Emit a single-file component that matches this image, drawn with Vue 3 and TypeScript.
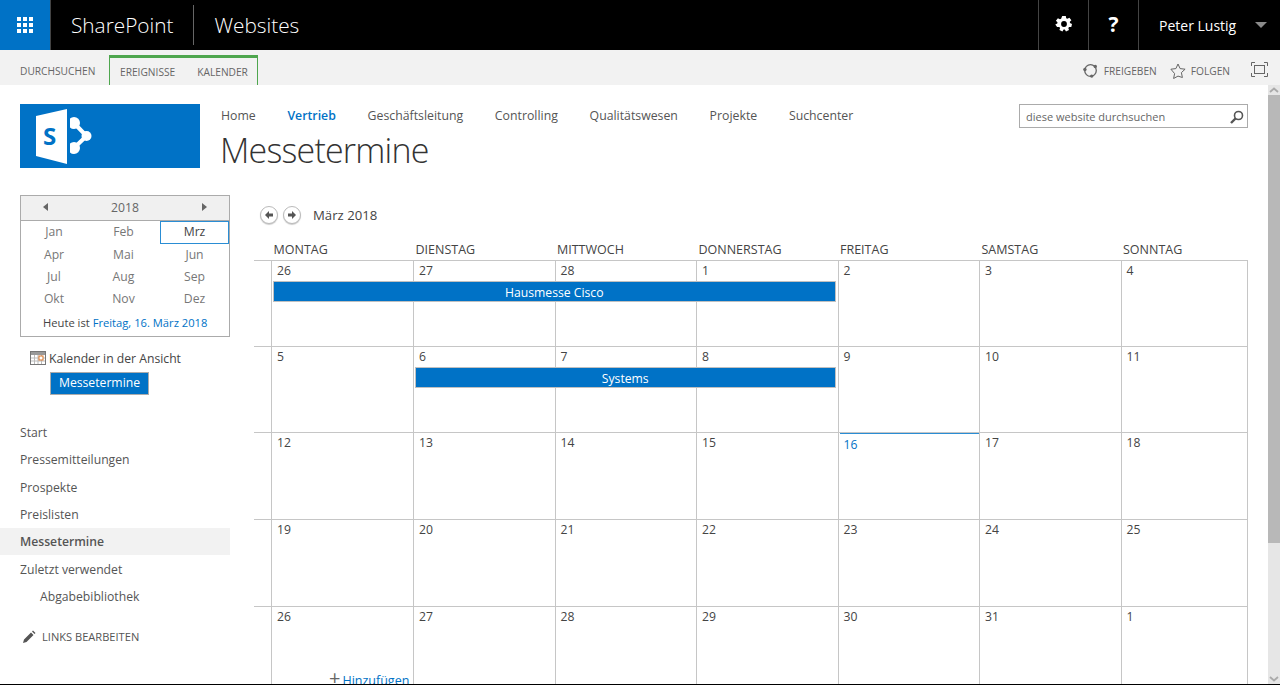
<script setup lang="ts">
const navItems = ['Home', 'Vertrieb', 'Geschäftsleitung', 'Controlling', 'Qualitätswesen', 'Projekte', 'Suchcenter']
const months = ['Jan', 'Feb', 'Mrz', 'Apr', 'Mai', 'Jun', 'Jul', 'Aug', 'Sep', 'Okt', 'Nov', 'Dez']
const dayNames = ['MONTAG', 'DIENSTAG', 'MITTWOCH', 'DONNERSTAG', 'FREITAG', 'SAMSTAG', 'SONNTAG']
const weeks: { days: number[]; event?: { title: string; start: number; end: number } }[] = [
  { days: [26, 27, 28, 1, 2, 3, 4], event: { title: 'Hausmesse Cisco', start: 1, end: 5 } },
  { days: [5, 6, 7, 8, 9, 10, 11], event: { title: 'Systems', start: 2, end: 5 } },
  { days: [12, 13, 14, 15, 16, 17, 18] },
  { days: [19, 20, 21, 22, 23, 24, 25] },
  { days: [26, 27, 28, 29, 30, 31, 1] },
]
const sideLinks = [
  { label: 'Start' },
  { label: 'Pressemitteilungen' },
  { label: 'Prospekte' },
  { label: 'Preislisten' },
  { label: 'Messetermine', active: true },
  { label: 'Zuletzt verwendet' },
  { label: 'Abgabebibliothek', sub: true },
]
</script>

<template>
  <div class="page">
    <header class="topbar">
      <div class="waffle">
        <svg width="16" height="16" viewBox="0 0 16 16" fill="#fff">
          <rect x="0" y="0" width="4" height="4" /><rect x="6" y="0" width="4" height="4" /><rect x="12" y="0" width="4" height="4" />
          <rect x="0" y="6" width="4" height="4" /><rect x="6" y="6" width="4" height="4" /><rect x="12" y="6" width="4" height="4" />
          <rect x="0" y="12" width="4" height="4" /><rect x="6" y="12" width="4" height="4" /><rect x="12" y="12" width="4" height="4" />
        </svg>
      </div>
      <div class="brand">SharePoint</div>
      <div class="brand-sep"></div>
      <div class="brand">Websites</div>
      <div class="top-right">
        <div class="top-btn">
          <svg class="gear" width="18" height="18" viewBox="0 0 18 18">
            <path fill="#fff" fill-rule="evenodd" d="M7.2 1h3.6l.4 2.2 1.2.6 2-1.100 2 2.600-1.600 1.500.2 1.300 2 .8-.7 3.200-2.200-.1-.8 1 .7 2.100-3 1.400-1.200-1.900h-1.200l-1.200 1.900-3-1.400.7-2.100-.8-1-2.200.1L.3 9.400l2-.8.2-1.300L.9 5.800l2-2.600 2 1.100 1.200-.6zM9 6.100a2.900 2.900 0 1 0 0 5.800 2.900 2.900 0 0 0 0-5.800z" />
          </svg>
        </div>
        <div class="top-btn help">?</div>
        <div class="user">
          <span>Peter Lustig</span>
          <svg width="12" height="6" viewBox="0 0 12 6"><path d="M0 0h12L6 6z" fill="#8a8a8a" /></svg>
        </div>
      </div>
    </header>

    <div class="ribbon">
      <div class="tab">DURCHSUCHEN</div>
      <div class="tab-group">
        <div class="tab">EREIGNISSE</div>
        <div class="tab">KALENDER</div>
      </div>
      <div class="ribbon-right">
        <div class="r-action">
          <svg width="15" height="15" viewBox="0 0 15 15" fill="none">
            <circle cx="7.500" cy="7.500" r="5.800" stroke="#666" stroke-width="1.300" />
            <circle cx="1.900" cy="6.500" r="1.700" fill="#666" /><circle cx="12.300" cy="3.500" r="1.700" fill="#666" /><circle cx="8.700" cy="13.100" r="1.700" fill="#666" />
          </svg>
          <span>FREIGEBEN</span>
        </div>
        <div class="r-action">
          <svg width="16" height="16" viewBox="0 0 16 16"><path d="M8 1l2.100 4.600 5 .6-3.700 3.400 1 4.900L8 13.100l-4.400 2.400 1-4.900L.9 6.200l5-.6z" fill="none" stroke="#666" /></svg>
          <span>FOLGEN</span>
        </div>
        <svg class="focus" width="17" height="15" viewBox="0 0 17 15" fill="none" stroke="#666">
          <path d="M.5 4V.5H4M13 .5h3.500V4M16.500 11v3.500H13M4 14.500H.5V11" />
          <rect x="3.500" y="3.500" width="10" height="8" />
        </svg>
      </div>
    </div>

    <div class="body">
      <div class="content">
        <div class="masthead">
          <div class="logo">
            <svg width="180" height="64" viewBox="0 0 180 64">
              <defs><clipPath id="nodes-clip"><rect x="50" y="0" width="40" height="64" /></clipPath></defs>
              <path d="M16 12 47 5v55l-31-8z" fill="#fff" />
              <text x="23" y="41" class="logo-s">S</text>
              <g clip-path="url(#nodes-clip)" fill="#fff" stroke="#fff">
                <path d="M54 19 66.500 32 54 44" fill="none" stroke-width="4" />
                <circle cx="54" cy="19" r="6" stroke="none" />
                <circle cx="66.500" cy="32" r="5" stroke="none" />
                <circle cx="54" cy="44" r="6" stroke="none" />
              </g>
            </svg>
          </div>
          <div class="head-main">
            <nav class="topnav">
              <a v-for="n in navItems" :key="n" :class="{ on: n === 'Vertrieb' }">{{ n }}</a>
            </nav>
            <h1>Messetermine</h1>
          </div>
          <div class="search">
            <span>diese website durchsuchen</span>
            <svg width="14" height="14" viewBox="0 0 14 14" fill="none" stroke="#555">
              <circle cx="8.500" cy="5.500" r="4" stroke-width="1.600" /><path d="M5.500 8.500 1 13" stroke-width="2.400" />
            </svg>
          </div>
        </div>

        <div class="columns">
          <aside class="side">
            <div class="picker">
              <div class="picker-head">
                <i class="tri left"></i><span>2018</span><i class="tri right"></i>
              </div>
              <div class="months">
                <div v-for="m in months" :key="m" class="month" :class="{ cur: m === 'Mrz' }">{{ m }}</div>
              </div>
              <div class="today-line">Heute ist <a>Freitag, 16. März 2018</a></div>
            </div>
            <div class="in-view">
              <svg width="16" height="14" viewBox="0 0 16 14">
                <rect x=".5" y=".5" width="15" height="13" fill="#fff" stroke="#777" />
                <rect x="1" y="1" width="14" height="3" fill="#999" />
                <path d="M1 7h14M1 10h14M4.500 4v9M8 4v9M11.500 4v9" stroke="#bbb" />
                <rect x="9" y="5" width="4" height="4" fill="#fff" stroke="#d9762b" />
              </svg>
              <span>Kalender in der Ansicht</span>
            </div>
            <div class="cal-chip">Messetermine</div>
            <ul class="links">
              <li v-for="l in sideLinks" :key="l.label" :class="{ active: l.active, sub: l.sub }">{{ l.label }}</li>
            </ul>
            <div class="edit-links">
              <svg width="14" height="14" viewBox="0 0 14 14"><path d="M1 13l1-3.500 7-7 2.500 2.500-7 7zM10 1.500l1-1 2.500 2.500-1 1z" fill="#555" /></svg>
              <span>LINKS BEARBEITEN</span>
            </div>
          </aside>

          <main class="calendar">
            <div class="cal-title">
              <span class="round"><svg width="10" height="10" viewBox="0 0 10 10"><path d="M5 1 1 5l4 4V6.500h4v-3H5z" fill="#555" /></svg></span>
              <span class="round"><svg width="10" height="10" viewBox="0 0 10 10"><path d="M5 1l4 4-4 4V6.500H1v-3h4z" fill="#555" /></svg></span>
              <span class="cal-month">März 2018</span>
            </div>
            <div class="dayhead">
              <div v-for="d in dayNames" :key="d">{{ d }}</div>
            </div>
            <div class="week" v-for="(w, i) in weeks" :key="i" :class="{ tall: i >= 2 }">
              <div class="day" v-for="(d, j) in w.days" :key="j" :class="{ 'is-today': i === 2 && j === 4 }" :style="{ gridColumn: j + 1 }">{{ d }}</div>
              <div v-if="w.event" class="event" :style="{ gridColumn: `${w.event.start} / ${w.event.end}` }">{{ w.event.title }}</div>
              <a v-if="i === 4" class="add"><span class="plus">+</span>Hinzufügen</a>
            </div>
          </main>
        </div>
      </div>

      <div class="scrollbar">
        <div class="sb-btn"><svg width="10" height="6" viewBox="0 0 10 6"><path d="M1 5l4-3.500L9 5" fill="none" stroke="#aaa" stroke-width="1.800" /></svg></div>
        <div class="sb-thumb"></div>
        <div class="sb-track"></div>
        <div class="sb-btn"><svg width="10" height="6" viewBox="0 0 10 6"><path d="M1 1l4 3.500L9 1" fill="none" stroke="#aaa" stroke-width="1.800" /></svg></div>
      </div>
    </div>
  </div>
</template>

<style>
html, body { margin: 0; background: #fff; }
</style>

<style scoped>
* { box-sizing: border-box; }
.page {
  width: 1280px; height: 685px; overflow: hidden; display: flex; flex-direction: column;
  font-family: "Open Sans", "Liberation Sans", sans-serif; font-size: 12.2px; color: #444;
  border-bottom: 1px solid #000; background: #fff;
}
.topbar { height: 50px; background: #000; display: flex; align-items: center; color: #fff; flex: none; }
.waffle { width: 51px; height: 50px; background: #0072c6; border-right: 1px solid #444; display: flex; align-items: center; justify-content: center; }
.brand { font-size: 20.8px; font-weight: 300; padding-left: 20px; line-height: 50px; }
.brand-sep { width: 1px; height: 40px; background: #666; margin-left: 20px; }
.top-right { margin-left: auto; display: flex; height: 50px; }
.top-btn { width: 50px; border-left: 1px solid #444; display: flex; align-items: center; justify-content: center; font-size: 21px; font-weight: 700; }
.gear { margin-top: -2px; }
.help { padding-bottom: 2px; }
.user { width: 142px; border-left: 1px solid #444; display: flex; align-items: center; justify-content: space-between; padding: 0 13px 0 20px; font-size: 14px; }
.ribbon { height: 35px; background: #f2f2f2; display: flex; align-items: flex-end; flex: none; font-size: 10.2px; color: #666; padding-left: 20px; }
.tab { height: 30px; display: flex; align-items: center; padding-top: 2px; }
.ribbon > .tab { width: 89px; }
.tab-group { display: flex; height: 30px; width: 149px; border: 1px solid #4ea64e; border-top: 3px solid #4ea64e; border-bottom: 0; margin-top: 5px; padding-left: 10px; gap: 22px; background: #f2f2f2; }
.tab-group .tab { height: 27px; padding-top: 0; }
.ribbon-right { margin-left: auto; display: flex; align-items: center; height: 35px; padding: 6px 12px 0 0; }
.r-action { display: flex; align-items: center; gap: 6px; margin-right: 13px; }
.r-action + .r-action { gap: 5px; margin-right: 14px; }
.focus { margin-left: 7px; margin-top: -3px; }
.body { flex: 1; display: flex; min-height: 0; }
.content { flex: 1; min-width: 0; padding-left: 20px; overflow: hidden; }
.masthead { display: flex; padding-top: 19px; height: 91px; }
.logo { width: 180px; height: 64px; background: #0072c6; flex: none; overflow: hidden; }
.logo svg { display: block; }
.logo-s { font-family: "Open Sans", sans-serif; font-weight: 700; font-size: 24px; fill: #0072c6; }
.head-main { margin-left: 21px; width: 798px; }
.topnav { display: flex; gap: 31.700px; font-size: 12.300px; line-height: 24px; color: #555; }
.topnav a { display: block; }
.topnav .on { color: #0072c6; font-weight: 600; }
h1 { margin: 0 0 0 -1px; font-size: 34px; font-weight: 300; letter-spacing: -.8px; line-height: 44px; color: #333; }
.search { width: 229px; height: 24px; border: 1px solid #ababab; display: flex; align-items: center; justify-content: space-between; padding: 1px 3px 0 6px; font-size: 11px; color: #666; }
.columns { display: flex; }
.side { width: 210px; flex: none; padding-top: 19px; }
.picker { border: 1px solid #ababab; height: 142px; }
.picker-head { height: 25px; background: #f0f0f0; border-bottom: 1px solid #ababab; display: flex; align-items: center; justify-content: space-between; padding: 0 22px 2px; color: #666; }
.tri { width: 0; height: 0; border-top: 4px solid transparent; border-bottom: 4px solid transparent; }
.tri.left { border-right: 5px solid #666; }
.tri.right { border-left: 5px solid #666; }
.months { display: grid; grid-template-columns: 66px 73px 69px; grid-template-rows: 23px 22px 22px 22px; color: #777; text-align: center; }
.month { line-height: 22px; }
.month.cur { border: 1px solid #2a8dd4; color: #444; line-height: 20px; }
.today-line { margin-top: 4px; padding-left: 22px; font-size: 11.200px; color: #444; line-height: 18px; }
.today-line a { color: #0072c6; }
.in-view { display: flex; align-items: center; gap: 3px; margin: 13px 0 0 10px; height: 16px; }
.cal-chip { margin: 6px 0 0 30px; width: 99px; height: 23px; background: #0072c6; color: #fff; border: 1px solid #ababab; line-height: 20px; text-align: center; }
.links { list-style: none; margin: 24px 0 0 -20px; padding: 0; width: 230px; }
.links li { height: 27.300px; line-height: 27px; padding-left: 20px; color: #555; }
.links li.active { background: #f2f2f2; font-weight: 600; }
.links li.active + li { line-height: 29px; }
.links li.sub { padding-left: 40px; }
.edit-links { display: flex; align-items: center; gap: 6px; margin: 19px 0 0 2px; font-size: 11.100px; color: #555; }
.calendar { margin-left: 24px; width: 994px; flex: none; }
.cal-title { display: flex; align-items: center; padding: 29px 0 0 6px; gap: 5px; height: 49px; }
.round { width: 18px; height: 18px; border-radius: 50%; border: 1px solid #bbb; display: flex; align-items: center; justify-content: center; background: #fff; box-shadow: 0 1px 1px #ccc; }
.cal-month { margin-left: 7px; font-size: 13.200px; }
.dayhead { display: grid; grid-template-columns: 142px 141.500px 141.500px 141.500px 141.500px 141.500px 127px; margin: 16px 0 0 17px; height: 19px; padding-left: 2.500px; font-size: 12.500px; }
.week { display: grid; grid-template-columns: 142px 141.500px 141.500px 141.500px 141.500px 141.500px 127px; grid-template-rows: 20px 21px 44px; padding-left: 17px; border-top: 1px solid #c6c6c6; position: relative; width: 994px; }
.week.tall { grid-template-rows: 20px 21px 45px; }
.day { grid-row: 1 / span 3; border-left: 1px solid #c6c6c6; padding: 0 0 0 5px; line-height: 19px; color: #444; }
.day:nth-child(7) { border-right: 1px solid #c6c6c6; }
.day.is-today { color: #0072c6; background: linear-gradient(#2a8dd4, #2a8dd4) no-repeat 1px 0 / 139px 1px; padding-top: 2px; }
.event { grid-row: 2; height: 21px; background: #0072c6; border: 1px solid #c0c0c0; color: #fff; text-align: center; line-height: 21px; margin: 0 2px; z-index: 1; }
.add { position: absolute; left: 75px; top: 65px; color: #0072c6; font-size: 12.500px; }
.plus { color: #666; font-size: 20px; line-height: 12px; margin-right: 2px; }
.scrollbar { width: 12px; flex: none; display: flex; flex-direction: column; background: #e6e6e6; }
.sb-btn { height: 10px; display: flex; align-items: center; justify-content: center; background: #e6e6e6; }
.sb-thumb { height: 448px; background: #b8b8b8; }
.sb-track { flex: 1; }
</style>
